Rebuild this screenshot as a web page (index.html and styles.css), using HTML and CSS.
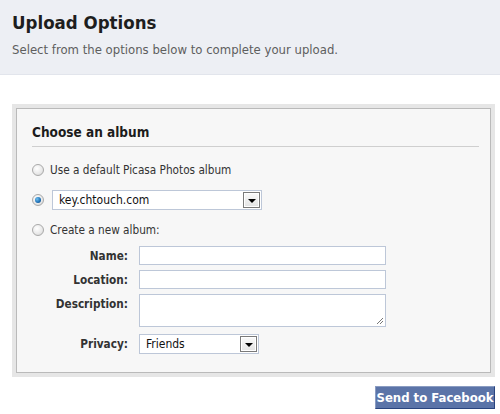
FILE: index.html
```html
<!DOCTYPE html>
<html>
<head>
<meta charset="utf-8">
<link rel="stylesheet" href="styles.css">
</head>
<body>
<div class="header">
  <h1 class="title">Upload Options</h1>
  <p class="subtitle">Select from the options below to complete your upload.</p>
</div>
<div class="main">
  <div class="box">
    <div class="panel">
      <h2 class="section">Choose an album</h2>
      <div class="option">
        <span class="radio"></span>
        <span class="opt-label">Use a default Picasa Photos album</span>
      </div>
      <div class="option">
        <span class="radio checked"></span>
        <div class="select album-select">
          <span class="select-text">key.chtouch.com</span>
          <span class="arrow"><span class="tri"></span></span>
        </div>
      </div>
      <div class="option">
        <span class="radio"></span>
        <span class="opt-label">Create a new album:</span>
      </div>
      <div class="form">
        <label class="flabel">Name:</label>
        <div class="input"></div>
        <label class="flabel">Location:</label>
        <div class="input"></div>
        <label class="flabel top">Description:</label>
        <div class="input textarea">
          <svg class="grip" width="8" height="8" viewBox="0 0 8 8"><path d="M7 1 L1 7 M7 4 L4 7" stroke="#777" stroke-width="1"/></svg>
        </div>
        <label class="flabel privacy-label">Privacy:</label>
        <div class="select privacy-select">
          <span class="select-text">Friends</span>
          <span class="arrow"><span class="tri"></span></span>
        </div>
      </div>
    </div>
  </div>
  <div class="actions">
    <button class="send">Send to Facebook</button>
  </div>
</div>
</body>
</html>
```
FILE: styles.css
```css
* { box-sizing: border-box; }
html, body { margin: 0; padding: 0; background: #fff; }
body {
  font-family: "DejaVu Sans Condensed", "DejaVu Sans", sans-serif;
  color: #333;
  width: 500px;
  height: 414px;
  overflow: hidden;
}
.header {
  background: #edeff4;
  height: 75px;
  border-bottom: 1px solid #e2e5ec;
  padding: 11px 12px 0 12px;
}
.title {
  margin: 0;
  font-size: 18.5px;
  font-weight: bold;
  color: #1e1e1e;
  line-height: 24px;
}
.subtitle {
  margin: 7px 0 0 0;
  font-size: 13px;
  color: #5e5e5e;
  line-height: 16px;
}
.main {
  padding: 29px 5px 0 12px;
}
.box {
  border: 4px solid #e6e6e6;
}
.panel {
  border: 1px solid #bababa;
  background: #f7f7f7;
  padding: 14px 11px 18px 15px;
}
.section {
  margin: 0;
  font-size: 13.5px;
  font-weight: bold;
  color: #1c1c1c;
  line-height: 18px;
  padding-bottom: 5px;
  border-bottom: 1px solid #cfcfcf;
  margin-bottom: 8px;
}
.option {
  display: flex;
  align-items: center;
  height: 30px;
  font-size: 11.7px;
  color: #333;
}
.radio {
  width: 12px;
  height: 12px;
  border-radius: 50%;
  border: 1px solid #a9a9a9;
  background: radial-gradient(circle at 40% 35%, #fff 0%, #e8e8e8 60%, #cfcfcf 100%);
  margin: 0 6px 0 0;
  flex: none;
  position: relative;
}
.radio.checked::after {
  content: "";
  position: absolute;
  left: 2px;
  top: 2px;
  width: 6px;
  height: 6px;
  border-radius: 50%;
  background: radial-gradient(circle at 35% 35%, #6fc0f0 0%, #1d6fb5 60%, #0d3e70 100%);
}
.opt-label { line-height: 14px; }
.select {
  display: flex;
  align-items: center;
  justify-content: space-between;
  height: 20px;
  border: 1px solid #bdc7d8;
  background: #fff;
  padding: 0 1px 0 6px;
  font-size: 12px;
  color: #111;
}
.album-select { width: 210px; margin-left: 2px; }
.select-text { line-height: 14px; }
.arrow {
  width: 17px;
  height: 16px;
  border: 1px solid #7a7a7a;
  background: linear-gradient(#fafafa, #e3e3e3);
  box-shadow: inset 0 0 0 1px #fff;
  display: flex;
  align-items: center;
  justify-content: center;
}
.tri {
  width: 0;
  height: 0;
  border-left: 4px solid transparent;
  border-right: 4px solid transparent;
  border-top: 4px solid #000;
  margin-top: 2px;
}
.form {
  display: grid;
  grid-template-columns: 96px 247px;
  column-gap: 11px;
  row-gap: 5px;
  margin-top: 1px;
  align-items: center;
}
.flabel {
  text-align: right;
  font-size: 11.7px;
  font-weight: bold;
  color: #333;
  line-height: 14px;
}
.flabel.top { align-self: start; padding-top: 3px; }
.input {
  height: 19px;
  border: 1px solid #bdc7d8;
  background: #fff;
}
.textarea {
  height: 33px;
  position: relative;
}
.grip { position: absolute; right: 1px; bottom: 1px; }
.privacy-label { margin-top: 2px; align-self: start; padding-top: 3px; }
.privacy-select { width: 120px; margin-top: 2px; }
.actions {
  display: flex;
  justify-content: flex-end;
  margin-top: 9px;
}
.send {
  width: 120px;
  height: 23px;
  background: #5b74a8;
  border: 1px solid #29447e;
  border-top-color: #8a9cc2;
  border-left-color: #8a9cc2;
  color: #fff;
  font-family: "DejaVu Sans Condensed", "DejaVu Sans", sans-serif;
  font-weight: bold;
  font-size: 13px;
  padding: 0;
  line-height: 20px;
}
```
